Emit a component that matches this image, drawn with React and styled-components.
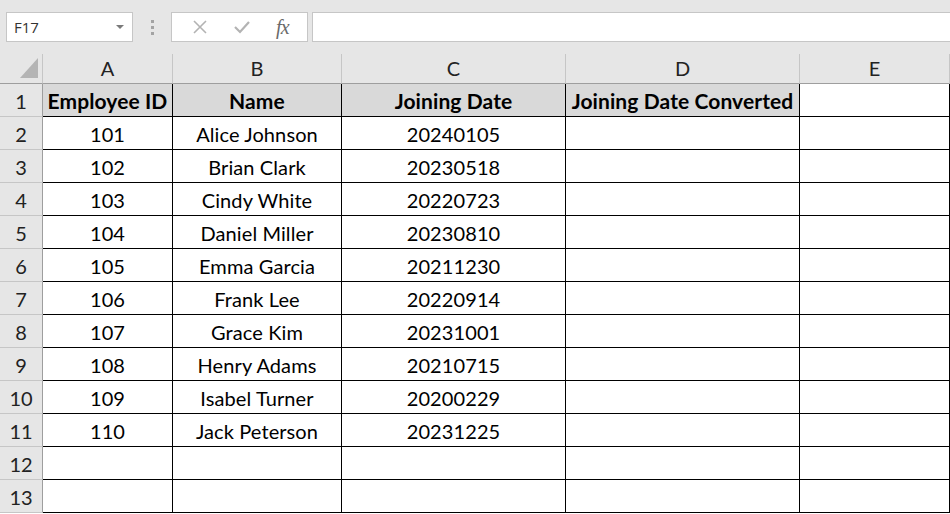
import React from 'react';
import styled, { createGlobalStyle } from 'styled-components';

const GlobalStyle = createGlobalStyle`
  body {
    margin: 0;
    background: #ffffff;
    font-family: Lato, 'Open Sans', sans-serif;
  }
`;

const Page = styled.div`
  width: 950px;
  height: 514px;
  overflow: hidden;
  background: #ffffff;
`;

const Toolbar = styled.div`
  display: flex;
  align-items: flex-start;
  height: 54px;
  padding: 12px 0 0 6px;
  box-sizing: border-box;
  background: #e6e6e6;
`;

const NameBox = styled.div`
  display: flex;
  align-items: center;
  justify-content: space-between;
  width: 127px;
  height: 30px;
  box-sizing: border-box;
  padding: 0 8px 0 7px;
  background: #ffffff;
  border: 1px solid #c6c6c6;
  font-family: 'Open Sans', sans-serif;
  font-size: 15px;
  color: #333333;
`;

const Caret = styled.span`
  width: 0;
  height: 0;
  border-left: 4px solid transparent;
  border-right: 4px solid transparent;
  border-top: 4px solid #7a7a7a;
`;

const Grip = styled.div`
  display: flex;
  flex-direction: column;
  align-items: center;
  gap: 3px;
  width: 38px;
  padding-top: 8px;
  box-sizing: border-box;

  span {
    width: 3px;
    height: 3px;
    background: #a3a3a3;
  }
`;

const FxBox = styled.div`
  display: flex;
  align-items: center;
  justify-content: space-around;
  width: 137px;
  height: 30px;
  box-sizing: border-box;
  padding: 0 6px 0 8px;
  background: #ffffff;
  border: 1px solid #c6c6c6;
`;

const FxLabel = styled.span`
  font-family: 'Liberation Serif', serif;
  font-style: italic;
  font-size: 20px;
  color: #6a6a6a;
  letter-spacing: -1px;
`;

const FormulaInput = styled.div`
  flex: 1;
  height: 30px;
  margin-left: 4px;
  box-sizing: border-box;
  background: #ffffff;
  border: 1px solid #c6c6c6;
  border-right: none;
`;

const Sheet = styled.div`
  display: grid;
  grid-template-columns: 43px 130px 169px 224px 234px 150px;
  grid-template-rows: 30px repeat(13, 33px);
  font-size: 20px;
  color: #000000;
`;

const Corner = styled.div`
  position: relative;
  background: #e6e6e6;
  border-right: 1px solid #c6c6c6;
  border-bottom: 1px solid #9e9e9e;
  box-sizing: border-box;

  &::after {
    content: '';
    position: absolute;
    right: 4px;
    bottom: 5px;
    width: 0;
    height: 0;
    border-left: 18px solid transparent;
    border-bottom: 20px solid #b4b4b4;
  }
`;

const ColHeader = styled.div`
  display: flex;
  align-items: flex-end;
  justify-content: center;
  padding-bottom: 3px;
  box-sizing: border-box;
  background: #e6e6e6;
  border-right: 1px solid #c6c6c6;
  border-bottom: 1px solid #9e9e9e;
  color: #222222;
  line-height: 24px;
`;

const RowHeader = styled.div`
  display: flex;
  align-items: center;
  justify-content: center;
  padding-top: 1px;
  box-sizing: border-box;
  background: #e6e6e6;
  border-right: 1px solid #9e9e9e;
  border-bottom: 1px solid #c6c6c6;
  color: #222222;
  line-height: 32px;
`;

const Cell = styled.div`
  display: flex;
  align-items: center;
  justify-content: center;
  padding-top: 1px;
  box-sizing: border-box;
  border-right: 1px solid #000000;
  border-bottom: 1px solid #000000;
  background: ${(p) => (p.$head ? '#d9d9d9' : '#ffffff')};
  font-weight: ${(p) => (p.$head ? 700 : 400)};
  font-size: ${(p) => (p.$head ? '21px' : '20px')};
  letter-spacing: ${(p) => (p.$head ? '0.1px' : '0.1px')};
  white-space: nowrap;
  line-height: 32px;
`;

const XIcon = () => (
  <svg width="16" height="16" viewBox="0 0 16 16">
    <path d="M2 2 L14 14 M14 2 L2 14" stroke="#b3b3b3" strokeWidth="1.6" fill="none" />
  </svg>
);

const CheckIcon = () => (
  <svg width="18" height="16" viewBox="0 0 18 16">
    <path d="M2 8 L7 13 L16 3" stroke="#b3b3b3" strokeWidth="2.2" fill="none" />
  </svg>
);

const columns = ['A', 'B', 'C', 'D', 'E'];

const header = ['Employee ID', 'Name', 'Joining Date', 'Joining Date Converted'];

const rows = [
  ['101', 'Alice Johnson', '20240105'],
  ['102', 'Brian Clark', '20230518'],
  ['103', 'Cindy White', '20220723'],
  ['104', 'Daniel Miller', '20230810'],
  ['105', 'Emma Garcia', '20211230'],
  ['106', 'Frank Lee', '20220914'],
  ['107', 'Grace Kim', '20231001'],
  ['108', 'Henry Adams', '20210715'],
  ['109', 'Isabel Turner', '20200229'],
  ['110', 'Jack Peterson', '20231225'],
  ['', '', ''],
  ['', '', ''],
];

export default function App() {
  return (
    <Page>
      <GlobalStyle />
      <Toolbar>
        <NameBox>
          F17
          <Caret />
        </NameBox>
        <Grip>
          <span />
          <span />
          <span />
        </Grip>
        <FxBox>
          <XIcon />
          <CheckIcon />
          <FxLabel>fx</FxLabel>
        </FxBox>
        <FormulaInput />
      </Toolbar>
      <Sheet>
        <Corner />
        {columns.map((c) => (
          <ColHeader key={c}>{c}</ColHeader>
        ))}

        <RowHeader>1</RowHeader>
        {header.map((h) => (
          <Cell key={h} $head>
            {h}
          </Cell>
        ))}
        <Cell />

        {rows.map((r, i) => (
          <React.Fragment key={i}>
            <RowHeader>{i + 2}</RowHeader>
            <Cell>{r[0]}</Cell>
            <Cell>{r[1]}</Cell>
            <Cell>{r[2]}</Cell>
            <Cell />
            <Cell />
          </React.Fragment>
        ))}
      </Sheet>
    </Page>
  );
}
